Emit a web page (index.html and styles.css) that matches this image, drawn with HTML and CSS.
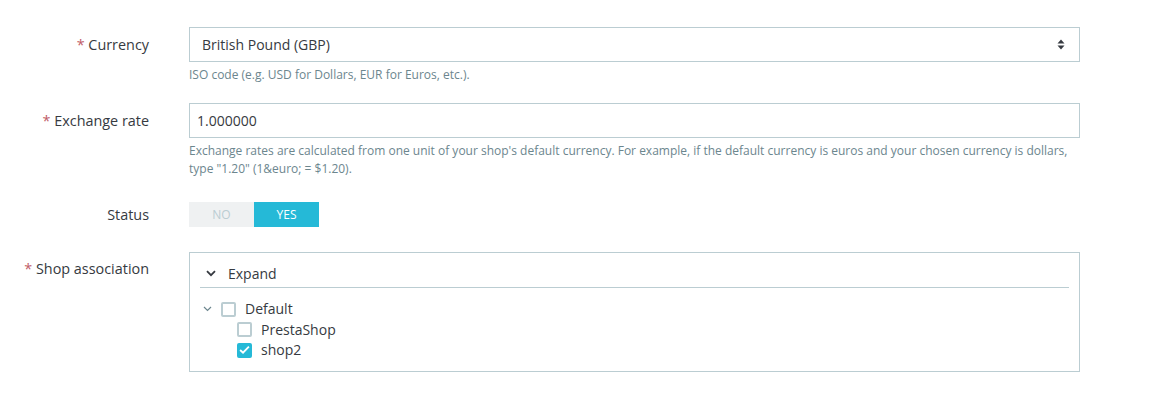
FILE: index.html
```html
<!DOCTYPE html>
<html>
<head>
<meta charset="utf-8">
<link rel="stylesheet" href="styles.css">
</head>
<body>
<form class="form">
  <div class="row">
    <label class="label"><span class="req">*</span> Currency</label>
    <div class="field">
      <div class="select">
        <span>British Pound (GBP)</span>
        <svg class="arrows" width="8" height="11" viewBox="0 0 8 11"><path d="M4 0.5 L7.5 4.5 H0.5 Z M4 10.5 L7.5 6.5 H0.5 Z" fill="#363a41"/></svg>
      </div>
      <p class="help">ISO code (e.g. USD for Dollars, EUR for Euros, etc.).</p>
    </div>
  </div>
  <div class="row">
    <label class="label"><span class="req">*</span> Exchange rate</label>
    <div class="field">
      <div class="input">1.000000</div>
      <p class="help">Exchange rates are calculated from one unit of your shop's default currency. For example, if the default currency is euros and your chosen currency is dollars, type "1.20" (1&amp;euro; = $1.20).</p>
    </div>
  </div>
  <div class="row row-status">
    <label class="label label-status">Status</label>
    <div class="field">
      <div class="toggle">
        <span class="opt off">NO</span>
        <span class="opt on">YES</span>
      </div>
    </div>
  </div>
  <div class="row">
    <label class="label label-shop"><span class="req">*</span> Shop association</label>
    <div class="field">
      <div class="tree">
        <div class="tree-head">
          <svg class="chev" width="10" height="7" viewBox="0 0 10 7"><path d="M1 1.2 L5 5.2 L9 1.2" fill="none" stroke="#363a41" stroke-width="1.8"/></svg>
          <span>Expand</span>
        </div>
        <div class="tree-body">
          <div class="node">
            <svg class="chev-sm" width="9" height="6" viewBox="0 0 9 6"><path d="M1 1 L4.5 4.5 L8 1" fill="none" stroke="#6c868e" stroke-width="1.2"/></svg>
            <span class="cb"></span>
            <span class="node-text">Default</span>
          </div>
          <div class="node child">
            <span class="cb"></span>
            <span class="node-text">PrestaShop</span>
          </div>
          <div class="node child">
            <span class="cb checked"><svg width="12" height="10" viewBox="0 0 12 10"><path d="M1.2 5 L4.4 8 L10.8 1.4" fill="none" stroke="#fff" stroke-width="2"/></svg></span>
            <span class="node-text">shop2</span>
          </div>
        </div>
      </div>
    </div>
  </div>
</form>
</body>
</html>
```

FILE: styles.css
```css
* { box-sizing: border-box; }
body {
  margin: 0;
  background: #fff;
  font-family: "Open Sans", "Noto Sans", sans-serif;
  color: #363a41;
}
.form {
  padding-top: 27px;
}
.row {
  display: flex;
  gap: 40px;
  margin-bottom: 19px;
}
.row-status { margin-top: 24px; margin-bottom: 25px; }
.label {
  width: 149px;
  flex: none;
  text-align: right;
  font-size: 14.4px;
  line-height: 35px;
  color: #363a41;
}
.label-status { line-height: 25px; }
.label-shop { line-height: 20px; padding-top: 7px; }
.req { color: #c05c67; }
.field {
  width: 891px;
  flex: none;
}
.select, .input {
  height: 35px;
  border: 1px solid #bbcdd2;
  background: #fff;
  font-size: 14px;
  display: flex;
  align-items: center;
}
.select {
  padding: 0 12px;
  justify-content: space-between;
}
.select .arrows { margin-right: 2px; }
.input { padding: 0 7px; }
.help {
  margin: 4px 0 0;
  font-size: 12px;
  line-height: 18px;
  color: #6c868e;
}
.toggle {
  display: flex;
  width: 130px;
  height: 25px;
  font-size: 12px;
}
.opt {
  flex: 1;
  display: flex;
  align-items: center;
  justify-content: center;
}
.off { background: #eff1f2; color: #bbcdd2; }
.on { background: #25b9d7; color: #fff; }
.tree {
  border: 1px solid #bbcdd2;
  height: 120px;
  padding: 0 10px;
}
.tree-head {
  display: flex;
  align-items: center;
  height: 35px;
  border-bottom: 1px solid #bbcdd2;
  font-size: 14px;
  padding-left: 6px;
  padding-top: 7px;
}
.tree-head .chev { margin-right: 12px; }
.tree-body { padding-top: 11px; }
.node {
  display: flex;
  align-items: center;
  height: 20.5px;
  font-size: 14px;
  padding-left: 3px;
}
.chev-sm { margin-right: 9px; }
.child { padding-left: 37px; }
.cb {
  width: 15px;
  height: 15px;
  border: 2px solid #bbcdd2;
  border-radius: 2px;
  margin-right: 9px;
  display: flex;
  align-items: center;
  justify-content: center;
  flex: none;
}
.cb.checked {
  background: #25b9d7;
  border-color: #25b9d7;
}
.node-text { line-height: 20px; }
```
